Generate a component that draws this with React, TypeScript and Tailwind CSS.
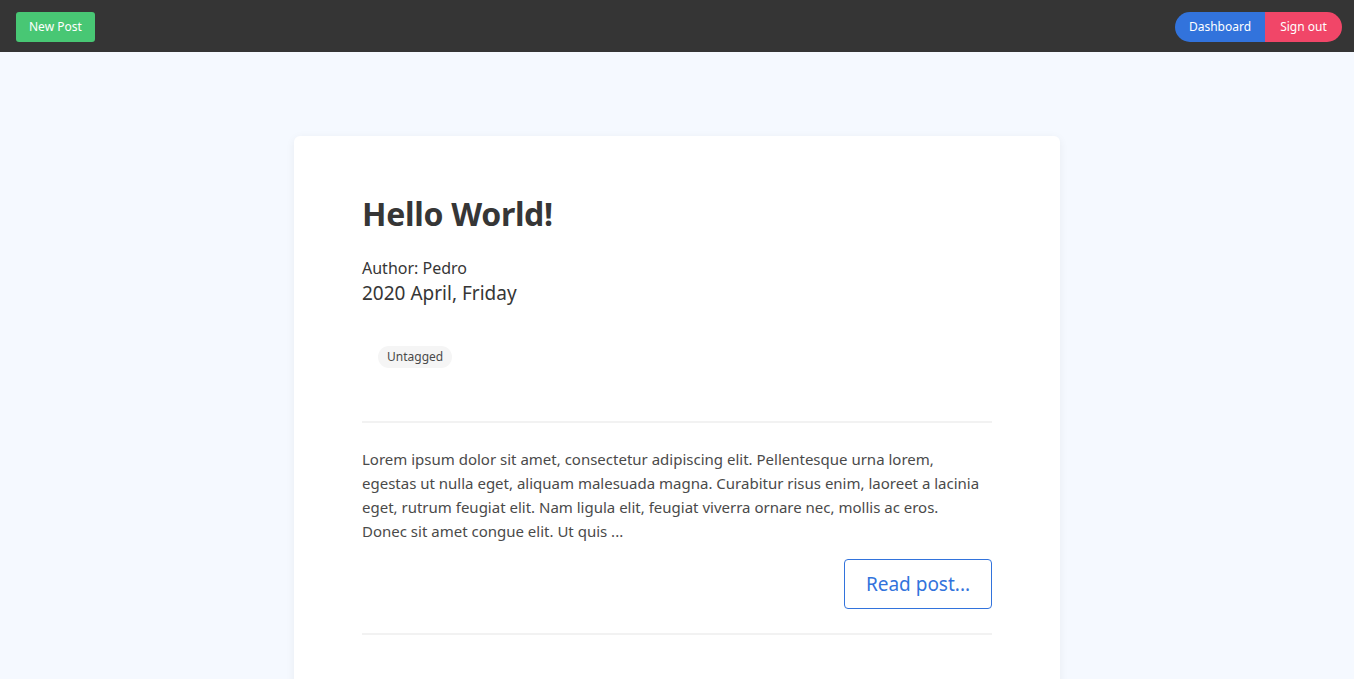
import React from "react";

const App: React.FC = () => {
  return (
    <div
      className="min-h-screen bg-[#f5f9ff] text-[#363636]"
      style={{ fontFamily: '"Noto Sans", "Open Sans", sans-serif' }}
    >
      <nav className="h-[52px] bg-[#353535] flex items-center justify-between pl-4 pr-3 pt-[2px]">
        <button className="h-[30px] px-[13px] rounded-[3px] bg-[#48c774] text-white text-[12px]">
          New Post
        </button>
        <div className="flex">
          <button className="h-[30px] w-[90px] rounded-l-full bg-[#3273dc] text-white text-[12px]">
            Dashboard
          </button>
          <button className="h-[30px] w-[77px] rounded-r-full bg-[#f14668] text-white text-[12px]">
            Sign out
          </button>
        </div>
      </nav>

      <main className="pt-[84px] flex justify-center">
        <div className="w-[766px] bg-white rounded-md shadow-[0_2px_10px_rgba(10,10,10,0.06)] px-[68px] pt-[56px] pb-[64px]">
          <h1 className="text-[32px] font-bold leading-[44px] tracking-[-0.3px]">Hello World!</h1>
          <p className="mt-[21px] text-[16px] leading-[22px]">Author: Pedro</p>
          <p className="text-[19px] leading-[28px]">2020 April, Friday</p>

          <div className="mt-[36px] pl-4">
            <span className="inline-flex items-center h-[22px] px-[9px] rounded-full bg-[#f5f5f5] text-[12px] text-[#4a4a4a]">
              Untagged
            </span>
          </div>

          <hr className="mt-[53px] border-0 h-[2px] bg-[#f2f2f2]" />

          <p className="mt-[24px] text-[15px] leading-[24px] text-[#4a4a4a]">
            Lorem ipsum dolor sit amet, consectetur adipiscing elit. Pellentesque urna lorem,
            <br />
            egestas ut nulla eget, aliquam malesuada magna. Curabitur risus enim, laoreet a lacinia
            <br />
            eget, rutrum feugiat elit. Nam ligula elit, feugiat viverra ornare nec, mollis ac eros.
            <br />
            Donec sit amet congue elit. Ut quis ...
          </p>

          <div className="mt-[16px] flex justify-end">
            <button className="h-[50px] w-[148px] border border-[#3273dc] rounded-[4px] text-[#3273dc] text-[19px]">
              Read post...
            </button>
          </div>

          <hr className="mt-[24px] border-0 h-[2px] bg-[#f2f2f2]" />
        </div>
      </main>
    </div>
  );
};

export default App;
